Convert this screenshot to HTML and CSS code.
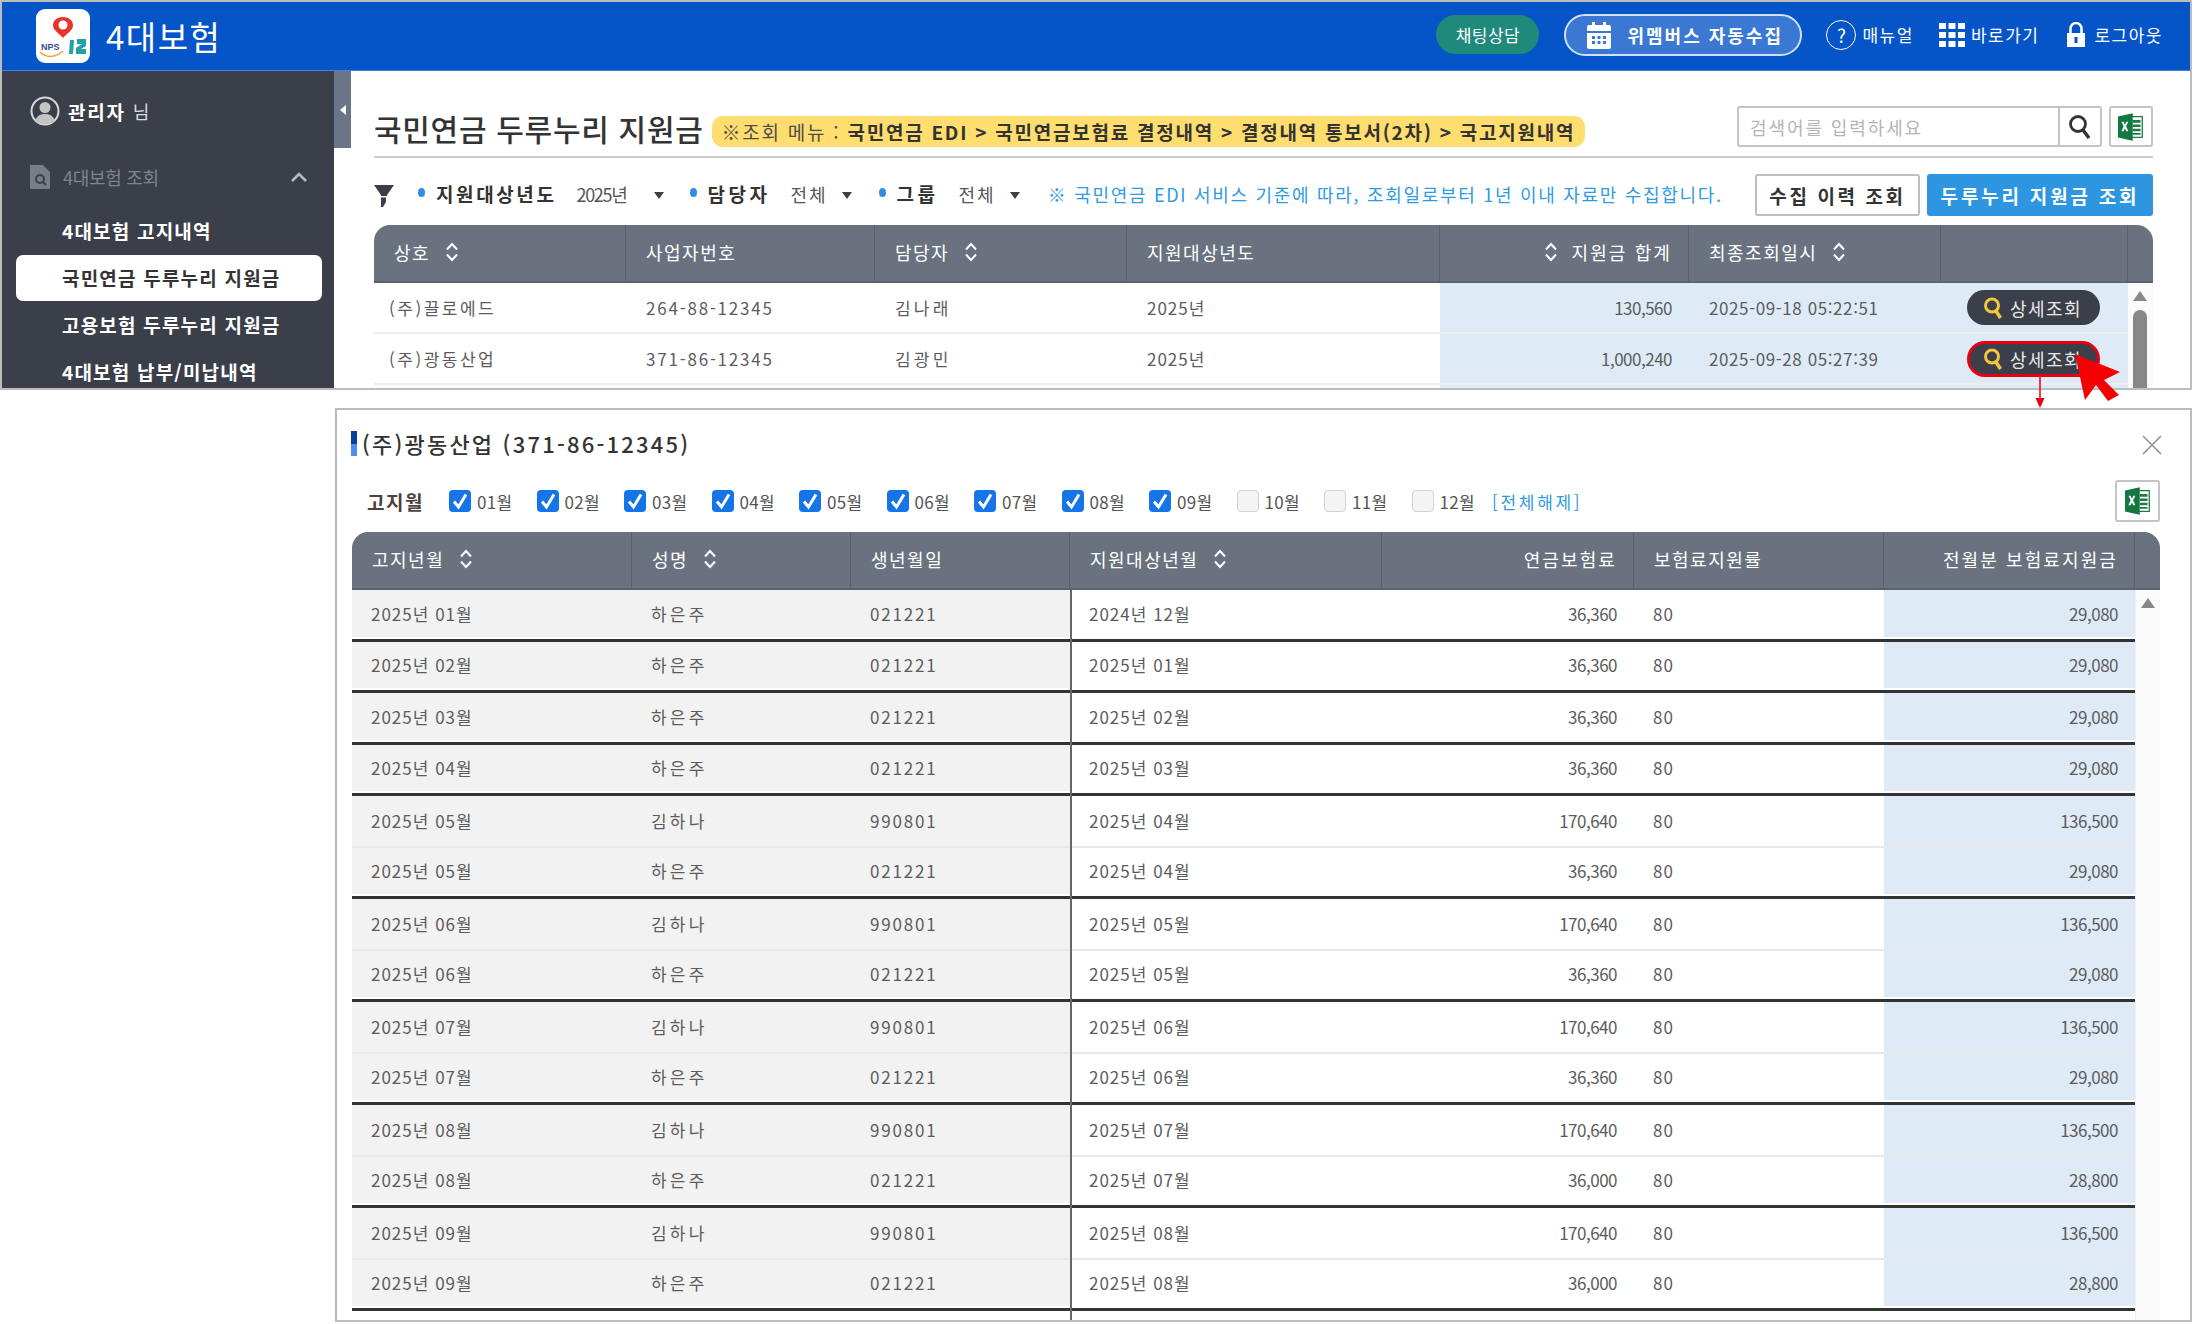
FILE: index.html
```html
<!DOCTYPE html>
<html lang="ko">
<head>
<meta charset="utf-8">
<title>4대보험</title>
<link rel="stylesheet" href="styles.css">
</head>
<body>
<svg class="defs" width="0" height="0" aria-hidden="true">
  <symbol id="sort" viewBox="0 0 14 20"><path d="M2 7.5 7 2l5 5.500M2 12.500 7 18l5-5.500" fill="none" stroke="currentColor" stroke-width="2"/></symbol>
  <symbol id="excel" viewBox="0 0 30 34">
    <path d="M13 5h15v24H13z" fill="#fff" stroke="#1f7a45" stroke-width="1.500"/>
    <path d="M17 9h9v3h-9zM17 14h9v3h-9zM17 19h9v3h-9zM17 24h9v2h-9z" fill="#1f7a45"/>
    <path d="M0 5 17 1v32L0 29z" fill="#13783f"/>
    <path d="m4 11 2.500 5L4 22h2.500l1.500-3.500L9.500 22H12l-2.700-6L12 11H9.700L8 14.500 6.400 11z" fill="#fff"/>
  </symbol>
  <symbol id="mag" viewBox="0 0 20 24"><circle cx="9" cy="9.500" r="6.500" fill="none" stroke="#f2c53d" stroke-width="3"/><path d="m13 15 4.500 7" stroke="#f2c53d" stroke-width="3.500" fill="none"/></symbol>
  <symbol id="check" viewBox="0 0 22 22"><path d="M5 11.500 9.500 17 17 4.500" fill="none" stroke="#fff" stroke-width="3"/></symbol>
</svg>
<div class="page">
  <section class="window app">
    <header class="topbar">
      <div class="logo">
        <svg viewBox="0 0 54 54" width="54" height="54">
          <path d="M27 8c-6 0-10 3.500-10 8.500 0 5 6 7.500 10 12.500 4-5 10-7.500 10-12.500C37 11.500 33 8 27 8z" fill="#e8342c"/>
          <circle cx="27" cy="16" r="4.500" fill="#fff"/>
          <text x="5" y="41" class="logo-nps">NPS</text>
          <path d="M4 43c6 6 15 6 23-1" fill="none" stroke="#e9a33a" stroke-width="1.500"/>
          <path d="M34 31h4l-1 14h-4zM41 30h9v7l-5 3h5v5h-10v-6l6-4h-5z" fill="#1fa3a8"/>
        </svg>
      </div>
      <div class="brand">4대보험</div>
      <div class="top-actions">
        <a class="chat">채팅상담</a>
        <a class="wemem">
          <svg width="26" height="28" viewBox="0 0 26 28"><path d="M1 6a2 2 0 0 1 2-2h3V1h3v3h8V1h3v3h3a2 2 0 0 1 2 2v4H1z" fill="#fff"/><path d="M1 12h24v14a2 2 0 0 1-2 2H3a2 2 0 0 1-2-2z" fill="#fff"/><path d="M6 15h3v3H6zM11.500 15h3v3h-3zM17 15h3v3h-3zM6 20h3v3H6zM11.500 20h3v3h-3zM17 20h3v3h-3z" fill="#3a78d4"/></svg>
          <span>위멤버스 자동수집</span>
        </a>
        <a class="tool manual"><span class="qmark">?</span>매뉴얼</a>
        <a class="tool quick">
          <svg width="26" height="24" viewBox="0 0 26 24" fill="#fff"><path d="M0 0h7v6H0zM9.500 0h7v6h-7zM19 0h7v6h-7zM0 9h7v6H0zM9.500 9h7v6h-7zM19 9h7v6h-7zM0 18h7v6H0zM9.500 18h7v6h-7zM19 18h7v6h-7z"/></svg>
          바로가기
        </a>
        <a class="tool logout">
          <svg width="20" height="25" viewBox="0 0 20 25"><path d="M4.500 11V6.500a5.500 5.500 0 0 1 11 0V11" fill="none" stroke="#fff" stroke-width="2.500"/><path d="M1 11h18v14H1z" fill="#fff"/><rect x="8.500" y="15" width="3" height="6" fill="#0555c8"/></svg>
          로그아웃
        </a>
      </div>
    </header>
    <div class="app-body">
      <nav class="sidebar">
        <div class="user">
          <svg width="30" height="30" viewBox="0 0 30 30"><circle cx="15" cy="15" r="13.500" fill="#3a3f4a" stroke="#d8d8d8" stroke-width="2"/><circle cx="15" cy="11.500" r="5.500" fill="#c4c4c4"/><path d="M5 25c2-6 6-7 10-7s8 1 10 7c-5 4-15 4-20 0z" fill="#c4c4c4"/></svg>
          <b>관리자</b><span>님</span>
        </div>
        <div class="group">
          <svg width="20" height="24" viewBox="0 0 20 24"><path d="M0 0h13l7 7v17H0z" fill="#777c85"/><circle cx="10" cy="14" r="4" fill="none" stroke="#3a3f4a" stroke-width="2"/><path d="m13 17 3 3" stroke="#3a3f4a" stroke-width="2"/></svg>
          <span>4대보험 조회</span>
          <svg class="chev" width="18" height="11" viewBox="0 0 18 11"><path d="m2 9 7-7 7 7" fill="none" stroke="#b8bcc2" stroke-width="2.500"/></svg>
        </div>
        <ul class="menu">
          <li>4대보험 고지내역</li>
          <li class="active">국민연금 두루누리 지원금</li>
          <li>고용보험 두루누리 지원금</li>
          <li>4대보험 납부/미납내역</li>
        </ul>
      </nav>
      <div class="handle"><i></i></div>
      <main class="content">
        <div class="title-row">
          <h1>국민연금 두루누리 지원금</h1>
          <p class="crumb">※조회 메뉴 : <b>국민연금 EDI &gt; 국민연금보험료 결정내역 &gt; 결정내역 통보서(2차) &gt; 국고지원내역</b></p>
          <div class="search">
            <span class="placeholder">검색어를 입력하세요</span>
            <span class="search-btn"><svg width="24" height="26" viewBox="0 0 24 26"><circle cx="10" cy="10" r="7.500" fill="none" stroke="#333" stroke-width="2.800"/><path d="m15 16 6 8" stroke="#333" stroke-width="3.500"/></svg></span>
          </div>
          <button class="icon-btn"><svg width="30" height="34"><use href="#excel"/></svg></button>
        </div>
        <div class="filter-row">
          <svg class="funnel" width="20" height="22" viewBox="0 0 20 22"><path d="M0 0h20l-7 10v1H7v-1z" fill="#3a3f4a"/><path d="M7 12.500h5V17l-3 5H7z" fill="#3a3f4a"/></svg>
          <span class="f-label f1">지원대상년도</span><span class="f-val narrow">2025년</span><i class="caret c1"></i>
          <span class="f-label f2">담당자</span><span class="f-val">전체</span><i class="caret"></i>
          <span class="f-label f3">그룹</span><span class="f-val">전체</span><i class="caret"></i>
          <span class="note">※ 국민연금 EDI 서비스 기준에 따라, 조회일로부터 1년 이내 자료만 수집합니다.</span>
          <button class="btn-outline">수집 이력 조회</button>
          <button class="btn-blue">두루누리 지원금 조회</button>
        </div>
        <div class="table t-top">
          <div class="thead">
            <div class="th">상호<svg class="sort"><use href="#sort"/></svg></div>
            <div class="th">사업자번호</div>
            <div class="th">담당자<svg class="sort"><use href="#sort"/></svg></div>
            <div class="th">지원대상년도</div>
            <div class="th end"><svg class="sort before"><use href="#sort"/></svg>지원금 합계</div>
            <div class="th">최종조회일시<svg class="sort"><use href="#sort"/></svg></div>
            <div class="th"></div>
            <div class="th last"></div>
          </div>
          <div class="tbody">
            <div class="rows">
              <div class="tr">
                <div class="td">(주)끌로에드</div><div class="td spaced">264-88-12345</div><div class="td">김나래</div><div class="td">2025년</div>
                <div class="td hi end">130,560</div><div class="td hi">2025-09-18 05:22:51</div>
                <div class="td hi act"><button class="detail"><svg width="20" height="24"><use href="#mag"/></svg>상세조회</button></div>
              </div>
              <div class="tr">
                <div class="td">(주)광동산업</div><div class="td spaced">371-86-12345</div><div class="td">김광민</div><div class="td">2025년</div>
                <div class="td hi end">1,000,240</div><div class="td hi">2025-09-28 05:27:39</div>
                <div class="td hi act"><button class="detail on"><svg width="20" height="24"><use href="#mag"/></svg>상세조회</button></div>
              </div>
              <div class="tr">
                <div class="td"></div><div class="td"></div><div class="td"></div><div class="td"></div>
                <div class="td hi"></div><div class="td hi"></div><div class="td hi"></div>
              </div>
            </div>
            <div class="scroll"><i class="up"></i><i class="thumb"></i></div>
          </div>
        </div>
      </main>
    </div>
  </section>

  <section class="window modal">
    <div class="modal-title">
      <i class="bar"></i>
      <h2>(주)광동산업 (371-86-12345)</h2>
      <svg class="close" width="20" height="20" viewBox="0 0 20 20"><path d="m1 1 18 18M19 1 1 19" stroke="#8f8f8f" stroke-width="1.500"/></svg>
    </div>
    <div class="month-row">
      <b class="m-label">고지월</b>
      <label class="m"><span class="box on"><svg width="22" height="22"><use href="#check"/></svg></span>01월</label>
      <label class="m"><span class="box on"><svg width="22" height="22"><use href="#check"/></svg></span>02월</label>
      <label class="m"><span class="box on"><svg width="22" height="22"><use href="#check"/></svg></span>03월</label>
      <label class="m"><span class="box on"><svg width="22" height="22"><use href="#check"/></svg></span>04월</label>
      <label class="m"><span class="box on"><svg width="22" height="22"><use href="#check"/></svg></span>05월</label>
      <label class="m"><span class="box on"><svg width="22" height="22"><use href="#check"/></svg></span>06월</label>
      <label class="m"><span class="box on"><svg width="22" height="22"><use href="#check"/></svg></span>07월</label>
      <label class="m"><span class="box on"><svg width="22" height="22"><use href="#check"/></svg></span>08월</label>
      <label class="m"><span class="box on"><svg width="22" height="22"><use href="#check"/></svg></span>09월</label>
      <label class="m"><span class="box"></span>10월</label>
      <label class="m"><span class="box"></span>11월</label>
      <label class="m"><span class="box"></span>12월</label>
      <a class="clear">[전체해제]</a>
      <button class="icon-btn xl"><svg width="30" height="34"><use href="#excel"/></svg></button>
    </div>
    <div class="table t-modal">
      <div class="thead">
        <div class="th">고지년월<svg class="sort"><use href="#sort"/></svg></div>
        <div class="th">성명<svg class="sort"><use href="#sort"/></svg></div>
        <div class="th">생년월일</div>
        <div class="th">지원대상년월<svg class="sort"><use href="#sort"/></svg></div>
        <div class="th end">연금보험료</div>
        <div class="th">보험료지원률</div>
        <div class="th end">전월분 보험료지원금</div>
        <div class="th last"></div>
      </div>
      <div class="tbody">
        <div class="rows">
          <div class="tr dark"><div class="td g">2025년 01월</div><div class="td g">하은주</div><div class="td g spaced">021221</div><div class="td">2024년 12월</div><div class="td end">36,360</div><div class="td">80</div><div class="td hi end">29,080</div></div>
          <div class="tr dark"><div class="td g">2025년 02월</div><div class="td g">하은주</div><div class="td g spaced">021221</div><div class="td">2025년 01월</div><div class="td end">36,360</div><div class="td">80</div><div class="td hi end">29,080</div></div>
          <div class="tr dark"><div class="td g">2025년 03월</div><div class="td g">하은주</div><div class="td g spaced">021221</div><div class="td">2025년 02월</div><div class="td end">36,360</div><div class="td">80</div><div class="td hi end">29,080</div></div>
          <div class="tr dark"><div class="td g">2025년 04월</div><div class="td g">하은주</div><div class="td g spaced">021221</div><div class="td">2025년 03월</div><div class="td end">36,360</div><div class="td">80</div><div class="td hi end">29,080</div></div>
          <div class="tr"><div class="td g">2025년 05월</div><div class="td g">김하나</div><div class="td g spaced">990801</div><div class="td">2025년 04월</div><div class="td end">170,640</div><div class="td">80</div><div class="td hi end">136,500</div></div>
          <div class="tr dark"><div class="td g">2025년 05월</div><div class="td g">하은주</div><div class="td g spaced">021221</div><div class="td">2025년 04월</div><div class="td end">36,360</div><div class="td">80</div><div class="td hi end">29,080</div></div>
          <div class="tr"><div class="td g">2025년 06월</div><div class="td g">김하나</div><div class="td g spaced">990801</div><div class="td">2025년 05월</div><div class="td end">170,640</div><div class="td">80</div><div class="td hi end">136,500</div></div>
          <div class="tr dark"><div class="td g">2025년 06월</div><div class="td g">하은주</div><div class="td g spaced">021221</div><div class="td">2025년 05월</div><div class="td end">36,360</div><div class="td">80</div><div class="td hi end">29,080</div></div>
          <div class="tr"><div class="td g">2025년 07월</div><div class="td g">김하나</div><div class="td g spaced">990801</div><div class="td">2025년 06월</div><div class="td end">170,640</div><div class="td">80</div><div class="td hi end">136,500</div></div>
          <div class="tr dark"><div class="td g">2025년 07월</div><div class="td g">하은주</div><div class="td g spaced">021221</div><div class="td">2025년 06월</div><div class="td end">36,360</div><div class="td">80</div><div class="td hi end">29,080</div></div>
          <div class="tr"><div class="td g">2025년 08월</div><div class="td g">김하나</div><div class="td g spaced">990801</div><div class="td">2025년 07월</div><div class="td end">170,640</div><div class="td">80</div><div class="td hi end">136,500</div></div>
          <div class="tr dark"><div class="td g">2025년 08월</div><div class="td g">하은주</div><div class="td g spaced">021221</div><div class="td">2025년 07월</div><div class="td end">36,000</div><div class="td">80</div><div class="td hi end">28,800</div></div>
          <div class="tr"><div class="td g">2025년 09월</div><div class="td g">김하나</div><div class="td g spaced">990801</div><div class="td">2025년 08월</div><div class="td end">170,640</div><div class="td">80</div><div class="td hi end">136,500</div></div>
          <div class="tr dark"><div class="td g">2025년 09월</div><div class="td g">하은주</div><div class="td g spaced">021221</div><div class="td">2025년 08월</div><div class="td end">36,000</div><div class="td">80</div><div class="td hi end">28,800</div></div>
        </div>
        <div class="scroll"><i class="up"></i></div>
      </div>
    </div>
  </section>

  <svg class="pointer" width="90" height="70" viewBox="0 0 90 70">
    <path d="M5 0v28" stroke="#e60012" stroke-width="1.500"/>
    <path d="M0.500 22h9L5 32z" fill="#e60012"/>
  </svg>
  <svg class="cursor" width="46" height="48" viewBox="0 0 46 48">
    <path d="M0 0 45 18 29 26 44 41 33 47 21 31 10 46z" fill="#f50000"/>
  </svg>
</div>
</body>
</html>
```

FILE: styles.css
```css
* { box-sizing: border-box; }
html, body { margin: 0; padding: 0; background: #fff; }
body {
  font-family: "Noto Sans CJK KR", "Noto Sans", "Liberation Sans", sans-serif;
  color: #555;
  font-size: 17px;
}
ul, h1, h2, p { margin: 0; padding: 0; }
button { font: inherit; cursor: default; }
.defs { position: absolute; }

.page { position: relative; width: 2192px; height: 1324px; overflow: hidden; }
.window { border: 2px solid #bcbcbc; background: #fff; }

/* app window */
.app { height: 390px; overflow: hidden; display: flex; flex-direction: column; }
.topbar {
  height: 69px; flex: none; background: #0555c8; display: flex; align-items: center;
  padding-left: 34px; color: #fff; border-bottom: 1px solid #3f82dc;
}
.logo { width: 54px; height: 54px; background: #fff; border-radius: 9px; flex: none; }
.logo svg { display: block; }
.logo-nps { font: 700 9px "Liberation Sans", sans-serif; fill: #3b4a8c; }
.brand { margin-left: 16px; font-size: 33px; letter-spacing: 1.500px; line-height: 1; }
.top-actions { margin-left: auto; display: flex; align-items: center; padding-right: 27px; font-size: 17px; margin-top: -3px; }
.chat {
  width: 103px; height: 39px; border-radius: 20px; background: #1f8a7c; display: flex;
  align-items: center; justify-content: center; letter-spacing: .5px;
}
.wemem {
  width: 238px; height: 42px; border-radius: 21px; background: #3a78d4; border: 2px solid #cfe0f7;
  margin-left: 25px; display: flex; align-items: center; padding-left: 20px; gap: 15px;
  font-weight: 700; font-size: 18px; letter-spacing: 2px; white-space: nowrap;
}
.tool { display: flex; align-items: center; white-space: nowrap; letter-spacing: 1.500px; }
.manual { margin-left: 24px; gap: 6px; }
.qmark {
  width: 30px; height: 30px; border: 1.500px solid #fff; border-radius: 50%; display: flex;
  align-items: center; justify-content: center; font-size: 19px; letter-spacing: 0;
}
.quick { margin-left: 25px; gap: 6px; }
.logout { margin-left: 27px; gap: 8px; }

.app-body { flex: 1; display: flex; min-height: 0; }
.sidebar { width: 332px; flex: none; background: #3a3f4a; color: #fff; }
.user { display: flex; align-items: center; padding: 23px 0 0 28px; height: 57px; }
.user b { margin-left: 8px; font-size: 19px; letter-spacing: 1.800px; }
.user span { margin-left: 7px; font-size: 18px; color: #ddd; }
.group { display: flex; align-items: center; padding: 36px 0 0 28px; height: 62px; color: #7f848d; font-size: 18px; }
.group span { margin-left: 13px; letter-spacing: -.3px; }
.group .chev { margin-left: 131px; }
.menu { list-style: none; padding: 18px 0 0 14px; }
.menu li {
  width: 306px; height: 46px; line-height: 46px; padding-left: 46px; margin-bottom: 1px;
  font-weight: 700; font-size: 19px; letter-spacing: 1.200px; white-space: nowrap;
}
.menu li.active { background: #fff; color: #333; border-radius: 7px; }

.handle { width: 17px; height: 77px; background: #6b7588; flex: none; display: flex; align-items: center; justify-content: center; }
.handle i { width: 0; height: 0; border: 5px solid transparent; border-right: 6px solid #fff; border-left: 0; }

.content { flex: 1; min-width: 0; padding: 36px 37px 0 23px; }
.title-row { display: flex; align-items: center; height: 51px; padding-bottom: 10px; border-bottom: 2px solid #ccc; position: relative; }
.title-row h1 { font-weight: 500; font-size: 30px; letter-spacing: .7px; color: #333; white-space: nowrap; line-height: 41px; margin-top: 3px; }
.crumb {
  margin: 9px 0 0 8px; height: 31px; line-height: 31px; padding: 0 10px; background: #ffdd6e; border-radius: 11px;
  font-size: 19px; color: #4d4d4d; white-space: nowrap; letter-spacing: 1.750px;
}
.crumb b { color: #333; }
.search {
  margin-left: auto; width: 365px; height: 41px; border: 2px solid #c4c4c4; border-radius: 3px; display: flex; align-items: center;
}
.placeholder { flex: 1; padding-left: 11px; color: #b4b4b4; font-size: 18px; letter-spacing: 1.900px; white-space: nowrap; }
.search-btn { width: 42px; height: 100%; border-left: 2px solid #c4c4c4; display: flex; align-items: center; justify-content: center; }
.icon-btn {
  width: 44px; height: 41px; margin-left: 7px; background: #fff; border: 2px solid #c4c4c4; border-radius: 3px;
  padding: 0; display: flex; align-items: center; justify-content: center;
}
.icon-btn svg { width: 26px; height: 30px; }

.filter-row { display: flex; align-items: center; height: 42px; margin-top: 16px; font-size: 18px; line-height: 1; }
.funnel { flex: none; margin-top: 2px; }
.f-label { position: relative; font-weight: 700; color: #333; white-space: nowrap; letter-spacing: 2.600px; font-size: 19px; padding-bottom: 3px; }
.f-label::before {
  content: ""; position: absolute; left: -18px; top: 4px; width: 7px; height: 9px; border-radius: 50%; background: #2f8ee0;
}
.f1 { margin-left: 42px; }
.f2 { margin-left: 44px; letter-spacing: 3.500px; }
.f3 { margin-left: 45px; letter-spacing: 3.500px; }
.f-val { margin-left: 20px; color: #555; letter-spacing: 2px; padding-bottom: 3px; }
.f-val.narrow { margin-left: 20px; letter-spacing: -1.300px; }
.caret { width: 0; height: 0; margin-left: 14px; border: 5.500px solid transparent; border-top: 7px solid #3a3f4a; border-bottom: 0; }
.caret.c1 { margin-left: 27px; }
.note { margin-left: 28px; color: #2f9be0; white-space: nowrap; letter-spacing: 1.700px; padding-bottom: 3px; }
.btn-outline {
  margin-left: auto; width: 165px; height: 42px; background: #fff; border: 2px solid #bdbdbd; border-radius: 3px; color: #333;
  font-weight: 700; font-size: 19px; letter-spacing: 2.600px; padding: 0;
}
.btn-blue {
  margin-left: 7px; width: 226px; height: 42px; background: #2e96e0; border: 0; border-radius: 3px; color: #fff;
  font-weight: 700; font-size: 19px; letter-spacing: 2.800px; padding: 0;
}

/* tables */
.table { margin-top: 9px; }
.thead { display: grid; height: 58px; background: #6a7280; border-radius: 16px 16px 0 0; color: #fff; border-bottom: 2px solid #5a6270; }
.th {
  display: flex; align-items: center; padding-left: 20px; border-right: 1px solid #586070; font-size: 18px;
  letter-spacing: 1.500px; white-space: nowrap; padding-bottom: 2px;
}
.th.end { justify-content: flex-end; padding-right: 16px; padding-left: 0; letter-spacing: 2.100px; }
.th.last { border-right: 0; padding: 0; }
.sort { width: 14px; height: 20px; margin-left: 15px; flex: none; }
.sort.before { margin: 0 14px 0 0; }
.tbody { display: flex; position: relative; }
.rows { flex: 1; min-width: 0; }
.tr { display: grid; }
.td { display: flex; align-items: center; padding-left: 20px; white-space: nowrap; letter-spacing: 1px; font-size: 17px; color: #5c5c5c; }
.td.end { justify-content: flex-end; padding: 0 17px 0 0; letter-spacing: -.5px; }
.td.spaced { letter-spacing: 1.800px; }
.td.hi { background: #deebf7; }
.scroll { position: relative; background: #fafafa; }
.scroll .up { position: absolute; left: 5px; top: 8px; width: 0; height: 0; border: 7px solid transparent; border-bottom: 10px solid #888; border-top: 0; }
.scroll .thumb { position: absolute; left: 5px; top: 27px; width: 14px; height: 90px; border-radius: 7px; background: #888; }

.t-top { width: 1779px; }
.t-top .thead { grid-template-columns: 252px 249px 252px 313px 249px 252px 187px 25px; }
.t-top .tr { grid-template-columns: 252px 249px 252px 313px 249px 252px 187px; height: 51px; border-bottom: 2px solid #eee; }
.t-top .td { padding-left: 15px; }
.t-top .td:nth-child(1) { letter-spacing: 2.500px; }
.t-top .td:nth-child(2), .t-top .td:nth-child(6) { padding-left: 20px; }
.t-top .td:nth-child(3), .t-top .td:nth-child(4) { padding-left: 20px; }
.t-top .td:nth-child(3) { letter-spacing: 3.200px; }
.t-top .td:nth-child(6) { letter-spacing: .6px; }
.t-top .scroll { width: 25px; }
.t-top .td.hi.end { padding-right: 17px; }
.act { padding-left: 26px !important; }
.detail {
  width: 133px; height: 35px; border-radius: 18px; background: #3a3f4a; color: #e8e8e8; border: 0; display: flex; align-items: center;
  padding: 0 0 0 16px; gap: 7px; font-size: 18px; letter-spacing: 1.400px; white-space: nowrap;
}
.detail.on { border: 3px solid #e60012; padding-left: 13px; height: 36px; }

/* modal */
.modal { margin: 18px 0 0 335px; height: 914px; padding: 0 30px 0 15px; }
.modal-title { height: 69px; display: flex; align-items: center; position: relative; padding-bottom: 3px; }
.bar { width: 6px; height: 25px; margin-left: -1px; background: linear-gradient(#0a3f9c 50%, #4f8ef0 50%); flex: none; }
.modal-title h2 { margin-left: 5px; font-weight: 500; font-size: 22px; letter-spacing: 2.200px; color: #333; white-space: nowrap; }
.close { position: absolute; right: -2px; top: 25px; }
.month-row { display: flex; align-items: center; height: 44px; padding-left: 15px; margin-top: 0; }
.m-label { font-size: 19px; color: #4d4040; letter-spacing: 1.500px; width: 82px; flex: none; white-space: nowrap; }
.m { display: flex; align-items: center; width: 87.500px; flex: none; font-size: 17px; color: #555; letter-spacing: .3px; }
.box { width: 22px; height: 22px; border-radius: 4px; background: #f4f4f4; border: 1.500px solid #d2d2d2; margin-right: 6px; flex: none; }
.box.on { background: #1574e8; border: 0; }
.box svg { display: block; }
.clear { margin-left: -7px; color: #2f9be0; letter-spacing: 2.700px; font-size: 17px; white-space: nowrap; }
.icon-btn.xl { margin-left: auto; width: 45px; height: 42px; margin-right: 0; }
.t-modal { width: 1808px; margin-top: 9px; }
.t-modal .thead { grid-template-columns: 280px 219px 219px 312px 252px 250px 251px 25px; }
.t-modal .tr { grid-template-columns: 280px 219px 219px 312px 252px 250px 251px; height: 51.500px; border-bottom: 2px solid #e9e9e9; }
.t-modal .tr.dark { border-bottom: 3px solid #333; }
.t-modal .tr.dark .td { margin-bottom: 2px; }
.t-modal .td { padding-left: 19px; }
.t-modal .td.end { padding: 0 17px 0 0; }
.t-modal .td.g { background: #f2f2f2; }
.t-modal .td:nth-child(2) { letter-spacing: 3.200px; }
.t-modal .td:nth-child(3) { padding-left: 19px; }
.t-modal .scroll { width: 25px; height: 730px; border-left: 1px solid #f0f0f0; }
.t-modal .tbody::after { content: ""; position: absolute; left: 718px; top: 0; bottom: 0; width: 2px; background: #666; }

/* annotation arrows over the two windows */
.pointer { position: absolute; left: 2035px; top: 376px; }
.cursor { position: absolute; left: 2075px; top: 354px; }
```
